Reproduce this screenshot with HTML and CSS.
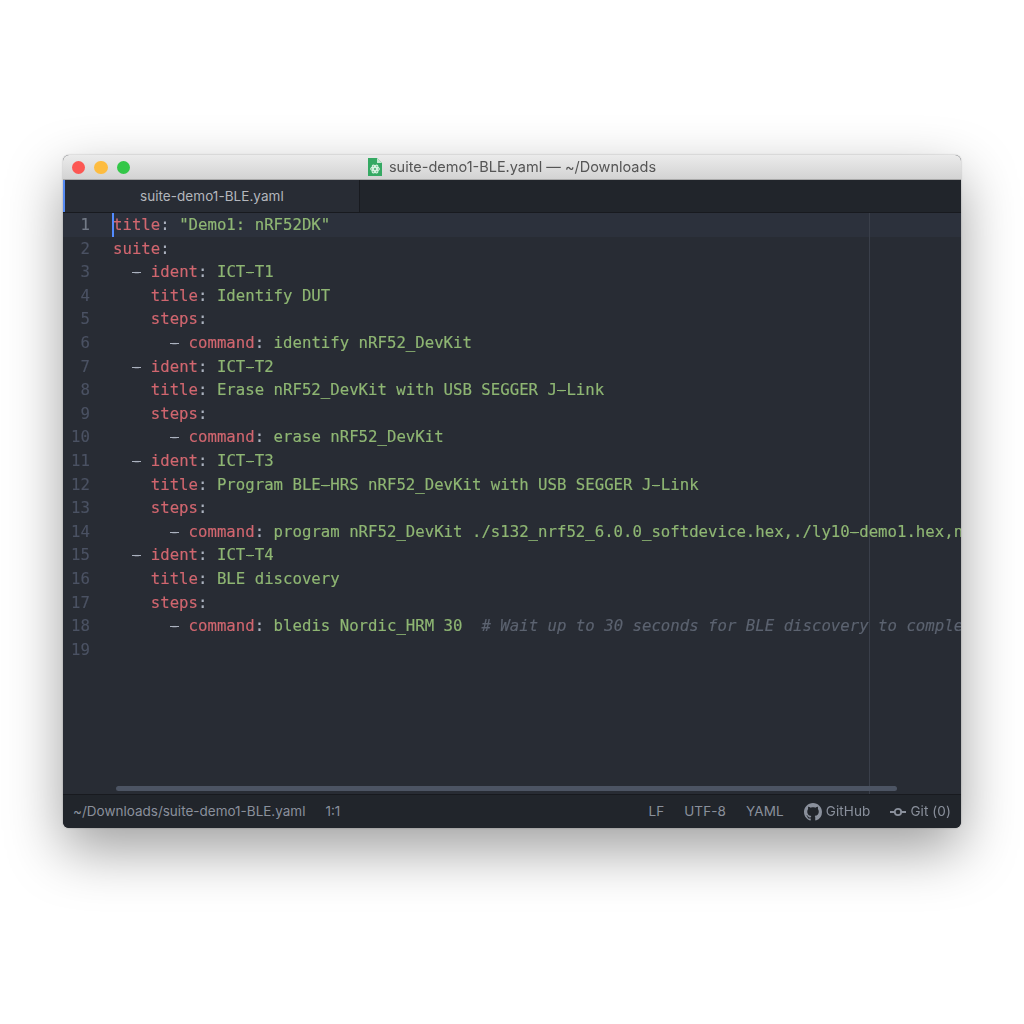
FILE: index.html
```html
<!DOCTYPE html>
<html lang="en">
<head>
<meta charset="utf-8">
<title>suite-demo1-BLE.yaml — ~/Downloads</title>
<link rel="stylesheet" href="styles.css">
</head>
<body>
<main class="window">
  <header class="titlebar">
    <div class="lights"><span class="light red"></span><span class="light yellow"></span><span class="light green"></span></div>
    <div class="title">
      <svg class="file-icon" width="14" height="18" viewBox="0 0 14 18"><path d="M0 0h9l5 5v13H0z" fill="#35a963"/><path d="M9 0l5 5H9z" fill="#c7e8d2"/><g fill="none" stroke="#d9f2e2" stroke-width="1.100"><circle cx="7" cy="11" r="1.500"/><ellipse cx="7" cy="11" rx="4.300" ry="1.900"/><ellipse cx="7" cy="11" rx="4.300" ry="1.900" transform="rotate(60 7 11)"/><ellipse cx="7" cy="11" rx="4.300" ry="1.900" transform="rotate(120 7 11)"/></g></svg>
      <span>suite-demo1-BLE.yaml — ~/Downloads</span>
    </div>
  </header>
  <nav class="tabbar">
    <div class="tab">suite-demo1-BLE.yaml</div>
  </nav>
  <section class="editor">
    <div class="guide"></div>
    <div class="scrollbar"></div>
    <div class="line active"><span class="num">1</span><span class="code"><i class="cursor"></i><b>title</b><u>:</u> <em>"Demo1: nRF52DK"</em></span></div>
    <div class="line"><span class="num">2</span><span class="code"><b>suite</b><u>:</u></span></div>
    <div class="line"><span class="num">3</span><span class="code">  <u class="dash">-</u> <b>ident</b><u>:</u> <em>ICT<i class="dash">-</i>T1</em></span></div>
    <div class="line"><span class="num">4</span><span class="code">    <b>title</b><u>:</u> <em>Identify DUT</em></span></div>
    <div class="line"><span class="num">5</span><span class="code">    <b>steps</b><u>:</u></span></div>
    <div class="line"><span class="num">6</span><span class="code">      <u class="dash">-</u> <b>command</b><u>:</u> <em>identify nRF52_DevKit</em></span></div>
    <div class="line"><span class="num">7</span><span class="code">  <u class="dash">-</u> <b>ident</b><u>:</u> <em>ICT<i class="dash">-</i>T2</em></span></div>
    <div class="line"><span class="num">8</span><span class="code">    <b>title</b><u>:</u> <em>Erase nRF52_DevKit with USB SEGGER J<i class="dash">-</i>Link</em></span></div>
    <div class="line"><span class="num">9</span><span class="code">    <b>steps</b><u>:</u></span></div>
    <div class="line"><span class="num">10</span><span class="code">      <u class="dash">-</u> <b>command</b><u>:</u> <em>erase nRF52_DevKit</em></span></div>
    <div class="line"><span class="num">11</span><span class="code">  <u class="dash">-</u> <b>ident</b><u>:</u> <em>ICT<i class="dash">-</i>T3</em></span></div>
    <div class="line"><span class="num">12</span><span class="code">    <b>title</b><u>:</u> <em>Program BLE<i class="dash">-</i>HRS nRF52_DevKit with USB SEGGER J<i class="dash">-</i>Link</em></span></div>
    <div class="line"><span class="num">13</span><span class="code">    <b>steps</b><u>:</u></span></div>
    <div class="line"><span class="num">14</span><span class="code">      <u class="dash">-</u> <b>command</b><u>:</u> <em>program nRF52_DevKit ./s132_nrf52_6.0.0_softdevice.hex,./ly10<i class="dash">-</i>demo1.hex,nrf52</em></span></div>
    <div class="line"><span class="num">15</span><span class="code">  <u class="dash">-</u> <b>ident</b><u>:</u> <em>ICT<i class="dash">-</i>T4</em></span></div>
    <div class="line"><span class="num">16</span><span class="code">    <b>title</b><u>:</u> <em>BLE discovery</em></span></div>
    <div class="line"><span class="num">17</span><span class="code">    <b>steps</b><u>:</u></span></div>
    <div class="line"><span class="num">18</span><span class="code">      <u class="dash">-</u> <b>command</b><u>:</u> <em>bledis Nordic_HRM 30</em>  <s># Wait up to 30 seconds for BLE discovery to complete</s></span></div>
    <div class="line"><span class="num">19</span><span class="code"></span></div>
  </section>
  <footer class="statusbar">
    <div class="status-left"><span>~/Downloads/suite-demo1-BLE.yaml</span><span>1:1</span></div>
    <div class="status-right">
      <span>LF</span><span>UTF-8</span><span>YAML</span>
      <span class="with-icon"><svg width="18" height="18" viewBox="0 0 16 16"><path fill="currentColor" d="M8 0C3.580 0 0 3.580 0 8c0 3.540 2.290 6.530 5.470 7.590.4.070.55-.170.55-.380 0-.190-.010-.820-.010-1.490-2.010.370-2.530-.490-2.690-.940-.090-.230-.480-.940-.820-1.130-.280-.150-.680-.520-.010-.530.630-.010 1.080.580 1.230.820.720 1.210 1.870.870 2.330.660.070-.520.280-.870.510-1.070-1.780-.200-3.640-.890-3.640-3.950 0-.870.310-1.590.820-2.150-.080-.200-.360-1.020.080-2.120 0 0 .670-.210 2.200.820.640-.180 1.320-.270 2-.270s1.360.090 2 .270c1.530-1.040 2.200-.820 2.200-.820.440 1.100.160 1.920.080 2.120.510.560.820 1.270.820 2.150 0 3.070-1.870 3.750-3.650 3.950.290.250.540.730.540 1.480 0 1.070-.010 1.930-.010 2.200 0 .210.150.460.550.380A8.010 8.010 0 0 0 16 8c0-4.420-3.580-8-8-8z"/></svg>GitHub</span>
      <span class="with-icon"><svg width="16" height="10" viewBox="0 0 16 10"><path d="M0 5h4.500M11.500 5H16" stroke="currentColor" stroke-width="1.800"/><circle cx="8" cy="5" r="3.200" fill="none" stroke="currentColor" stroke-width="1.800"/></svg>Git (0)</span>
    </div>
  </footer>
</main>
</body>
</html>
```
FILE: styles.css
```css
* { box-sizing: border-box; }
html, body { margin: 0; height: 100%; background: #fff; }
body { padding: 155px 63px 0; }

.window {
  width: 898px;
  height: 673px;
  display: flex;
  flex-direction: column;
  border-radius: 6px;
  overflow: hidden;
  background: #282c34;
  box-shadow: 0 22px 56px rgba(0, 0, 0, .38), 0 0 2px rgba(0, 0, 0, .3);
  filter: blur(.3px);
}

.titlebar {
  position: relative;
  height: 25px;
  flex: none;
  display: flex;
  align-items: center;
  justify-content: center;
  background: linear-gradient(#ebebeb, #d3d3d3);
  border-bottom: 1px solid #a9a9a9;
}
.lights { position: absolute; left: 8.500px; top: 5.500px; display: flex; gap: 9px; }
.light { width: 13.500px; height: 13.500px; border-radius: 50%; }
.red { background: #fc5753; }
.yellow { background: #fdbc40; }
.green { background: #33c748; }
.title {
  display: flex;
  align-items: center;
  gap: 7px;
  font: 14.500px/1 "Inter", "Liberation Sans", sans-serif;
  color: #555;
}
.file-icon { display: block; }

.tabbar {
  height: 33px;
  flex: none;
  display: flex;
  background: #21252b;
  border-bottom: 1px solid #181a1f;
}
.tab {
  width: 297px;
  height: 32px;
  padding: 8px 0 0 75px;
  background: #282c34;
  border-left: 2px solid #568af2;
  border-right: 1px solid #181a1f;
  font: 13.500px/16px "Inter", "Liberation Sans", sans-serif;
  letter-spacing: .05px;
  color: #b4b7bd;
}

.editor {
  position: relative;
  flex: 1;
  min-height: 0;
  overflow: hidden;
  background: #282c34;
  font: 15.700px/23.600px "DejaVu Sans Mono", "Liberation Mono", monospace;
  -webkit-text-stroke: .15px;
}
.line { display: flex; height: 23.600px; white-space: pre; }
.line.active { background: #2c313c; }
.num { flex: none; width: 27px; text-align: right; color: #4b5263; }
.active .num { color: #737a87; }
.code { position: relative; margin-left: 23px; color: #abb2bf; }
.code b { font-weight: 400; color: #e06c75; opacity: .92; }
.code em { font-style: normal; color: #98c379; opacity: .92; }
.code u { text-decoration: none; color: #abb2bf; }
.code s { text-decoration: none; font-style: italic; color: #5c6370; }
.dash { position: relative; font-style: normal; }
.dash::after { content: ""; position: absolute; left: .5px; right: .5px; top: 10px; height: 1px; background: currentColor; }
.cursor { position: absolute; left: -1px; top: 0; width: 2px; height: 23.600px; background: #528bff; }
.guide { position: absolute; left: 806px; top: 0; bottom: 0; width: 1px; background: #3a3f4a; }
.scrollbar { position: absolute; left: 53px; top: 573px; width: 781px; height: 5px; border-radius: 3px; background: #4c5463; }

.statusbar {
  height: 34px;
  flex: none;
  display: flex;
  align-items: center;
  justify-content: space-between;
  padding: 0 10px;
  background: #21252b;
  border-top: 1px solid #181a1f;
  font: 13.500px/1 "Inter", "Liberation Sans", sans-serif;
  color: #8a909c;
}
.status-left, .status-right { display: flex; align-items: center; gap: 20px; }
.status-right { letter-spacing: .1px; }
.with-icon { display: flex; align-items: center; gap: 4px; }
```
